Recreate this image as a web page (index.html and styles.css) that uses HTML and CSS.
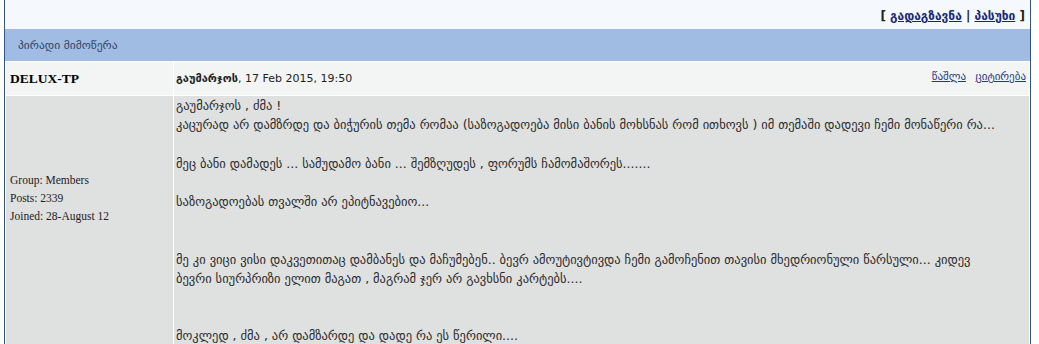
FILE: index.html
```html
<!DOCTYPE html>
<html lang="ka">
<head>
  <meta charset="UTF-8">
  <title>პირადი მიმოწერა</title>
  <link rel="stylesheet" href="styles.css">
</head>
<body>
  <div class="tableborder">
    <!-- Top actions -->
    <div class="topbar">
      [ <a href="#">გადაგზავნა</a> | <a href="#">პასუხი</a> ]
    </div>

    <div class="maintitle">პირადი მიმოწერა</div>

    <!-- Message -->
    <div class="post">
      <div class="post-author">DELUX-TP</div>
      <div class="post-head">
        <span class="post-date"><b>გაუმარჯოს</b>, 17 Feb 2015, 19:50</span>
        <span class="post-links"><a href="#">წაშლა</a> <a href="#">ციტირება</a></span>
      </div>

      <div class="post-info">
        <div class="avatar"></div>
        <p>Group: Members</p>
        <p>Posts: 2339</p>
        <p>Joined: 28-August 12</p>
      </div>
      <div class="post-body">
        გაუმარჯოს , ძმა !<br>
        კაცურად არ დამზრდე და ბიჭურის თემა რომაა (საზოგადოება მისი ბანის მოხსნას რომ ითხოვს ) იმ თემაში დადევი ჩემი მონაწერი რა...<br>
        <br>
        მეც ბანი დამადეს ... სამუდამო ბანი ... შემზღუდეს , ფორუმს ჩამომაშორეს.......<br>
        <br>
        საზოგადოებას თვალში არ ეპიტნავებიო...<br>
        <br>
        <br>
        მე კი ვიცი ვისი დაკვეთითაც დამბანეს და მაჩუმებენ.. ბევრ ამოუტივტივდა ჩემი გამოჩენით თავისი მხედრიონული წარსული... კიდევ<br>
        ბევრი სიურპრიზი ელით მაგათ , მაგრამ ჯერ არ გავხსნი კარტებს....<br>
        <br>
        <br>
        მოკლედ , ძმა , არ დამზარდე და დადე რა ეს წერილი....
      </div>
    </div>
  </div>
</body>
</html>
```

FILE: styles.css
```css
* {
  margin: 0;
  padding: 0;
  box-sizing: border-box;
}

body {
  background-color: #ffffff;
  font-family: "DejaVu Sans", Verdana, sans-serif;
  font-size: 11px;
  color: #222222;
}

a {
  color: #1c3a8a;
}

.tableborder {
  width: 1027px;
  margin-left: 4px;
  border: 1px solid #345487;
  border-top: 0;
  background-color: #ffffff;
  height: 360px;
}

.topbar {
  height: 29px;
  padding: 9px 5px 0 0;
  background-color: #f5f9fd;
  text-align: right;
  font-size: 12px;
  font-weight: bold;
  color: #222222;
}

.topbar a {
  color: #16287a;
}

.maintitle {
  height: 32px;
  padding: 9px 0 0 13px;
  background-color: #a1bce2;
  font-size: 11.5px;
  color: #2f4466;
}

.post {
  display: grid;
  grid-template-columns: 167px 1fr;
  grid-template-rows: 33px 1fr;
  gap: 1px;
  padding: 1px 1px 0;
  height: 300px;
}

.post-author {
  background-color: #f3f4f4;
  padding: 9px 0 0 4px;
  font-family: "Liberation Serif", "Times New Roman", serif;
  font-size: 13.5px;
  font-weight: bold;
  color: #000000;
}

.post-head {
  display: flex;
  justify-content: space-between;
  background-color: #f3f4f4;
  padding: 8px 3px 0 2px;
}

.post-date {
  font-size: 11px;
  padding-top: 2px;
}

.post-links {
  font-size: 11px;
}

.post-links a {
  margin-left: 6px;
}

.post-info {
  background-color: #dfe0e0;
  padding: 0 4px;
  font-family: "Liberation Serif", "Times New Roman", serif;
  font-size: 11.5px;
  line-height: 18px;
  color: #222222;
}

.avatar {
  height: 75px;
}

.post-body {
  background-color: #dfe0e0;
  padding: 0 2px;
  font-size: 12.5px;
  line-height: 19.2px;
  color: #2a2a2a;
}
```
